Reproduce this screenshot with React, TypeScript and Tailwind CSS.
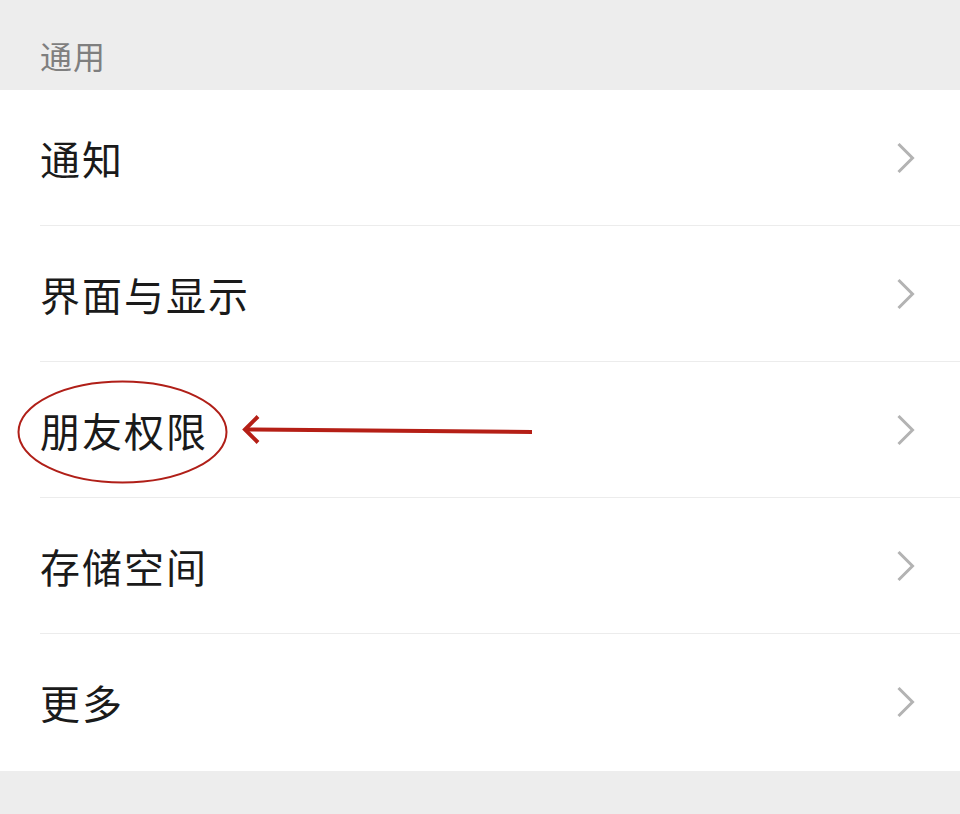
import React from 'react';

const items = ['通知', '界面与显示', '朋友权限', '存储空间', '更多'];

function Chevron() {
  return (
    <svg width="20" height="32" viewBox="0 0 20 32" fill="none" className="shrink-0">
      <path d="M2.5 2 L16.5 16 L2.5 30" stroke="#b3b3b3" strokeWidth="3" strokeLinecap="butt" strokeLinejoin="miter" />
    </svg>
  );
}

export default function App() {
  return (
    <div
      className="relative w-[960px] h-[814px] bg-[#ededed] overflow-hidden"
      style={{ fontFamily: '"Noto Sans CJK SC", "Noto Sans", sans-serif' }}
    >
      <div className="h-[90px] pl-[40px] pt-[39px] text-[32px] leading-[32px] tracking-[1px] text-[#7f7f7f]">通用</div>

      <div className="bg-white pb-px">
        {items.map((label, i) => (
          <div key={label} className="pl-[40px]">
            <div
              className={
                'h-[136px] flex items-center justify-between pr-[44px] ' +
                (i < items.length - 1 ? 'border-b border-[#ececec]' : '')
              }
            >
              <span className="text-[40px] leading-none tracking-[2px] text-[#1a1a1a]">{label}</span>
              <Chevron />
            </div>
          </div>
        ))}
      </div>

      {/* annotation drawn over the list */}
      <svg className="absolute inset-0 pointer-events-none" width="960" height="814" viewBox="0 0 960 814">
        <ellipse cx="122.5" cy="432" rx="104" ry="50.5" fill="none" stroke="#b01f18" strokeWidth="2" />
        <line x1="246" y1="429.5" x2="532" y2="432" stroke="#b51f16" strokeWidth="4" />
        <path d="M258 416.5 L245 429.5 L258 442.5" fill="none" stroke="#b51f16" strokeWidth="4" strokeLinecap="butt" />
      </svg>
    </div>
  );
}
